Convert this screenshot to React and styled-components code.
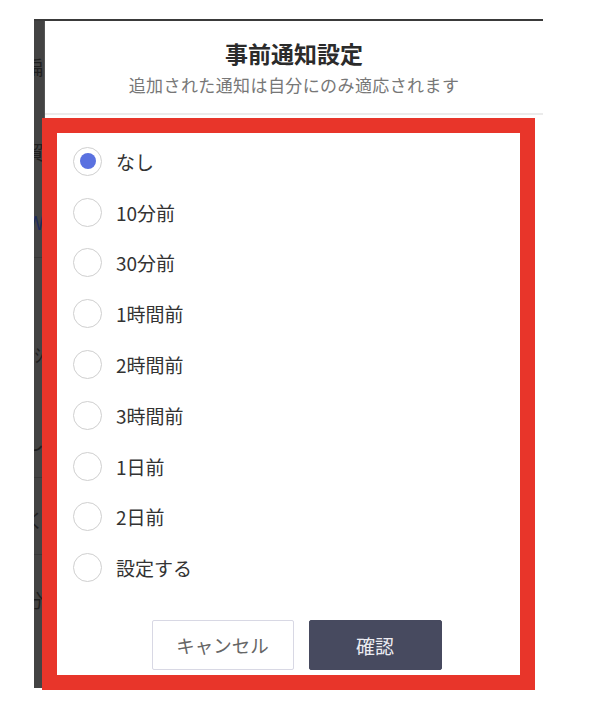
import { useState } from 'react';
import styled, { createGlobalStyle } from 'styled-components';

const GlobalStyle = createGlobalStyle`
  html, body {
    margin: 0;
    padding: 0;
    background: #ffffff;
  }
  body {
    font-family: "Noto Sans CJK JP", "Noto Sans", sans-serif;
    color: #333;
  }
`;

const options = [
  'なし',
  '10分前',
  '30分前',
  '1時間前',
  '2時間前',
  '3時間前',
  '1日前',
  '2日前',
  '設定する',
];

// faint bits of the page behind the dimmed overlay
const ghostRows = [
  { h: 36 },
  { h: 20, text: '扁' },
  { h: 65 },
  { h: 20, text: '貿' },
  { h: 50 },
  { h: 20, text: 'W', blue: true },
  { h: 26, line: true },
  { h: 87 },
  { h: 20, text: 'ｼ' },
  { h: 67 },
  { h: 20, text: 'し' },
  { h: 26, line: true },
  { h: 32 },
  { h: 20, text: 'く' },
  { h: 25, line: true },
  { h: 35 },
  { h: 20, text: '分' },
];

const Page = styled.div`
  padding: 19px 0 0 34px;
  width: 509px;
`;

const Frame = styled.div`
  display: flex;
  border-top: 2px solid #3a3a3a;
`;

const Strip = styled.div`
  width: 10px;
  height: 667px;
  background: #434343;
  display: flex;
  flex-direction: column;
  overflow: hidden;
  flex-shrink: 0;
`;

const GhostRow = styled.div`
  height: ${(p) => p.$h}px;
  flex-shrink: 0;
  display: flex;
  justify-content: flex-end;
  align-items: center;
  overflow: hidden;
  font-size: 19px;
  line-height: 20px;
  color: ${(p) => (p.$blue ? '#1d2b5c' : '#1f1f1f')};
  border-bottom: ${(p) => (p.$line ? '1px solid #383838' : 'none')};
  white-space: nowrap;
  box-sizing: border-box;
`;

const Modal = styled.div`
  flex: 1;
  display: flex;
  flex-direction: column;
  background: #fff;
  border-left: 1px solid #555;
`;

const Header = styled.div`
  height: 92px;
  display: flex;
  flex-direction: column;
  align-items: center;
  border-bottom: 2px solid #ebebeb;
`;

const Title = styled.h2`
  margin: 17px 0 0;
  font-size: 23px;
  line-height: 30px;
  font-weight: 700;
  color: #2b2b2b;
`;

const Subtitle = styled.p`
  margin: 4px 0 0;
  font-size: 17px;
  line-height: 26px;
  letter-spacing: 0.4px;
  color: #777;
`;

const Highlight = styled.div`
  margin: 3px 0 0 -3px;
  width: 493px;
  height: 572px;
  border: 15px solid #e8352a;
  box-sizing: border-box;
  background: #fff;
  display: flex;
  flex-direction: column;
  padding: 3px 0 0 16px;
`;

const OptionList = styled.div`
  display: flex;
  flex-direction: column;
`;

const OptionRow = styled.label`
  height: 50.8px;
  display: flex;
  align-items: center;
  gap: 14px;
  cursor: pointer;
  font-size: 19px;
  color: #333;
`;

const Radio = styled.span`
  width: 29px;
  height: 29px;
  border-radius: 50%;
  border: 1.5px solid #cfcfcf;
  box-sizing: border-box;
  display: flex;
  align-items: center;
  justify-content: center;
  flex-shrink: 0;
  &::after {
    content: '';
    width: 16px;
    height: 16px;
    border-radius: 50%;
    background: ${(p) => (p.$checked ? '#5a71e0' : 'transparent')};
  }
`;

const ButtonRow = styled.div`
  margin-top: 27px;
  display: flex;
  justify-content: center;
  gap: 15px;
`;

const Button = styled.button`
  width: ${(p) => (p.$primary ? 133 : 142)}px;
  height: 50px;
  border-radius: 2px;
  border: 1.5px solid ${(p) => (p.$primary ? '#474a5f' : '#d8d8e4')};
  background: ${(p) => (p.$primary ? '#474a5f' : '#fff')};
  color: ${(p) => (p.$primary ? '#ececf2' : '#666')};
  font-family: "Noto Sans CJK JP", "Noto Sans", sans-serif;
  font-size: ${(p) => (p.$primary ? 19 : 18.5)}px;
  cursor: pointer;
  padding: 0;
`;

const App = () => {
  const [selected, setSelected] = useState(0);

  return (
    <>
      <GlobalStyle />
      <Page>
        <Frame>
          <Strip>
            {ghostRows.map((r, i) => (
              <GhostRow key={i} $h={r.h} $blue={r.blue} $line={r.line}>
                {r.text}
              </GhostRow>
            ))}
          </Strip>
          <Modal>
            <Header>
              <Title>事前通知設定</Title>
              <Subtitle>追加された通知は自分にのみ適応されます</Subtitle>
            </Header>
            <Highlight>
              <OptionList>
                {options.map((o, i) => (
                  <OptionRow key={o} onClick={() => setSelected(i)}>
                    <Radio $checked={selected === i} />
                    {o}
                  </OptionRow>
                ))}
              </OptionList>
              <ButtonRow>
                <Button>キャンセル</Button>
                <Button $primary>確認</Button>
              </ButtonRow>
            </Highlight>
          </Modal>
        </Frame>
      </Page>
    </>
  );
};

export default App;
